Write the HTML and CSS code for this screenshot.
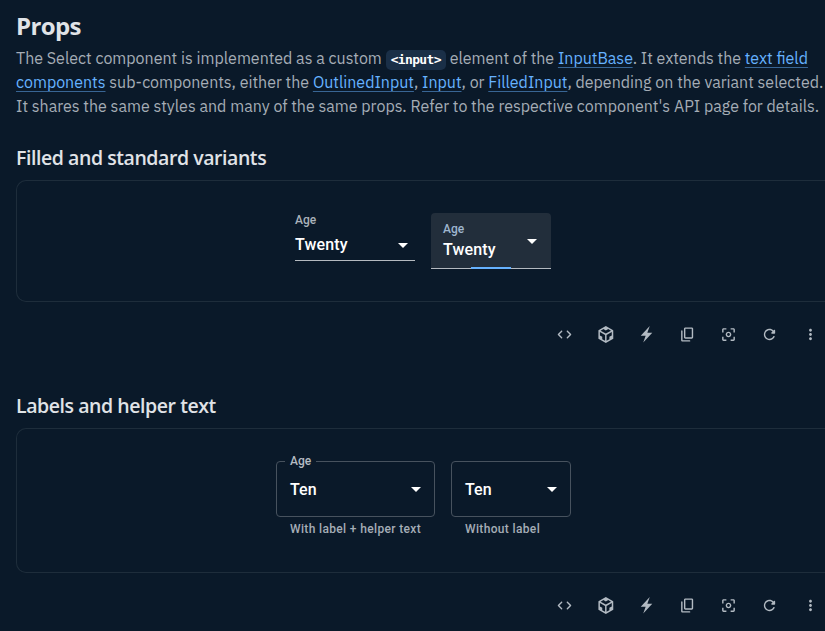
FILE: index.html
```html
<!DOCTYPE html>
<html lang="en">
<head>
<meta charset="utf-8">
<title>Select - Props</title>
<link rel="stylesheet" href="styles.css">
</head>
<body>
<svg class="defs" width="0" height="0" aria-hidden="true">
  <symbol id="code" viewBox="0 0 24 24"><path d="M8.7 15.9 4.8 12l3.9-3.9c.39-.39.39-1.01 0-1.4-.39-.39-1.01-.39-1.4 0l-4.59 4.59c-.39.39-.39 1.02 0 1.41l4.59 4.6c.39.39 1.01.39 1.4 0 .39-.39.39-1.01 0-1.4zm6.6 0 3.9-3.9-3.9-3.9c-.39-.39-.39-1.01 0-1.4.39-.39 1.01-.39 1.4 0l4.59 4.59c.39.39.39 1.02 0 1.41l-4.59 4.6c-.39.39-1.01.39-1.4 0-.39-.39-.39-1.01 0-1.4z"/></symbol>
  <symbol id="sandbox" viewBox="0 0 24 24"><path d="M2 6l10.455-6L22.91 6 23 17.95 12.455 24 2 18V6zm2.088 2.481v4.757l3.345 1.86v3.516l3.972 2.296v-8.272L4.088 8.481zm16.739 0l-7.317 4.157v8.272l3.972-2.296V15.1l3.345-1.861V8.48zM5.134 6.601l7.303 4.144 7.32-4.18-3.871-2.197-3.41 1.945-3.43-1.968L5.133 6.6z"/></symbol>
  <symbol id="bolt" viewBox="0 0 19 28"><path d="M8.13378 16.1087H0L14.8696 0L10.8662 11.1522L19 11.1522L4.13043 27.2609L8.13378 16.1087Z"/></symbol>
  <symbol id="copy" viewBox="0 0 24 24"><path d="M15 20H5V7c0-.55-.45-1-1-1s-1 .45-1 1v13c0 1.1.9 2 2 2h10c.55 0 1-.45 1-1s-.45-1-1-1zm5-4V4c0-1.1-.9-2-2-2H9c-1.1 0-2 .9-2 2v12c0 1.1.9 2 2 2h9c1.1 0 2-.9 2-2zm-2 0H9V4h9v12z"/></symbol>
  <symbol id="focus" viewBox="0 0 24 24"><path d="M5 15H3v4c0 1.1.9 2 2 2h4v-2H5v-4zM5 5h4V3H5c-1.1 0-2 .9-2 2v4h2V5zm14-2h-4v2h4v4h2V5c0-1.1-.9-2-2-2zm0 16h-4v2h4c1.1 0 2-.9 2-2v-4h-2v4zM12 8c-2.21 0-4 1.79-4 4s1.79 4 4 4 4-1.79 4-4-1.79-4-4-4zm0 6c-1.1 0-2-.9-2-2s.9-2 2-2 2 .9 2 2-.9 2-2 2z"/></symbol>
  <symbol id="refresh" viewBox="0 0 24 24"><path d="M17.65 6.35c-1.63-1.63-3.94-2.57-6.48-2.31-3.67.37-6.69 3.35-7.1 7.02C3.52 15.91 7.27 20 12 20c3.19 0 5.93-1.87 7.21-4.56.32-.67-.16-1.44-.9-1.44-.37 0-.72.2-.88.53-1.13 2.43-3.84 3.97-6.8 3.31-2.22-.49-4.01-2.3-4.48-4.52C5.31 9.44 8.26 6 12 6c1.66 0 3.14.69 4.22 1.78l-1.51 1.51c-.63.63-.19 1.71.7 1.71H19c.55 0 1-.45 1-1V6.41c0-.89-1.08-1.34-1.71-.71l-.64.65z"/></symbol>
  <symbol id="more" viewBox="0 0 24 24"><path d="M12 8c1.1 0 2-.9 2-2s-.9-2-2-2-2 .9-2 2 .9 2 2 2zm0 2c-1.100 0-2 .9-2 2s.9 2 2 2 2-.9 2-2-.9-2-2-2zm0 6c-1.100 0-2 .9-2 2s.9 2 2 2 2-.9 2-2-.9-2-2-2z"/></symbol>
  <symbol id="arrow" viewBox="0 0 24 24"><path d="M7 10l5 5 5-5z"/></symbol>
</svg>
<main>
  <h2>Props</h2>
  <p class="intro">
    <span class="line">The Select component is implemented as a custom <code>&lt;input&gt;</code> element of the <a>InputBase</a>. It extends the <a>text field</a></span>
    <span class="line"><a>components</a> sub-components, either the <a>OutlinedInput</a>, <a>Input</a>, or <a>FilledInput</a>, depending on the variant selected.</span>
    <span class="line">It shares the same styles and many of the same props. Refer to the respective component's API page for details.</span>
  </p>

  <h3 class="h-filled">Filled and standard variants</h3>
  <section class="demo demo-filled">
    <div class="field standard">
      <span class="label">Age</span>
      <div class="value">Twenty<svg class="caret"><use href="#arrow"/></svg></div>
    </div>
    <div class="field filled">
      <div class="stack"><span class="label">Age</span><span class="text">Twenty</span></div>
      <svg class="caret"><use href="#arrow"/></svg>
    </div>
  </section>
  <div class="toolbar">
    <svg><use href="#code"/></svg><svg><use href="#sandbox"/></svg><svg><use href="#bolt"/></svg><svg><use href="#copy"/></svg><svg><use href="#focus"/></svg><svg><use href="#refresh"/></svg><svg><use href="#more"/></svg>
  </div>

  <h3 class="h-labels">Labels and helper text</h3>
  <section class="demo demo-labels">
    <div class="control wide">
      <div class="outlined"><span class="notch">Age</span>Ten<svg class="caret"><use href="#arrow"/></svg></div>
      <span class="helper">With label + helper text</span>
    </div>
    <div class="control">
      <div class="outlined">Ten<svg class="caret"><use href="#arrow"/></svg></div>
      <span class="helper">Without label</span>
    </div>
  </section>
  <div class="toolbar">
    <svg><use href="#code"/></svg><svg><use href="#sandbox"/></svg><svg><use href="#bolt"/></svg><svg><use href="#copy"/></svg><svg><use href="#focus"/></svg><svg><use href="#refresh"/></svg><svg><use href="#more"/></svg>
  </div>
</main>
</body>
</html>
```
FILE: styles.css
```css
* { box-sizing: border-box; }
body {
  margin: 0;
  height: 631px;
  overflow: hidden;
  background: #0a1929;
  color: #fff;
  font-family: Roboto, "Liberation Sans", sans-serif;
}
.defs { display: block; height: 0; }
svg { fill: currentColor; flex: none; }
main { padding: 8px 0 0 16px; }
h2, h3 {
  margin: 0;
  font-family: "Segoe UI", "Open Sans", "Noto Sans", sans-serif;
  color: #e0e3e7;
  white-space: nowrap;
}
h2 { font-size: 24px; line-height: 35px; padding-bottom: 1px; font-weight: 700; letter-spacing: -0.6px; }
.intro {
  margin: 2px 0 0;
  font: 16px/24px "IBM Plex Sans", "Noto Sans", sans-serif;
  color: #a5adb6;
}
.line { display: block; height: 24px; white-space: nowrap; }
a {
  color: #66b2ff;
  text-decoration: underline;
  text-decoration-color: rgba(102, 178, 255, 0.5);
  text-decoration-thickness: 1px;
  text-underline-offset: 3px;
}
code {
  display: inline-block;
  height: 20px;
  padding: 0 5px;
  border-radius: 5px;
  background: #1a2f47;
  color: #fff;
  font: 700 13px/20px "DejaVu Sans Mono", monospace;
  letter-spacing: -0.65px;
}
h3 { font-size: 19.5px; line-height: 30px; font-weight: 600; letter-spacing: -0.44px; }
.h-filled { margin-top: 25px; }
.h-labels { margin-top: 48px; }
.demo {
  display: flex;
  gap: 16px;
  margin-top: 7px;
  border: 1px solid #1e2d3b;
  border-right: 0;
  border-radius: 10px 0 0 10px;
}
.demo-filled { height: 122px; padding: 32px 0 0 278px; }
.demo-labels { height: 145px; padding: 32px 0 0 259px; }
.caret { width: 24px; height: 24px; }
.label { font-size: 12px; line-height: 14px; font-weight: 500; color: #abb2ba; }
.standard { width: 120px; height: 48px; border-bottom: 1px solid #b5bac0; }
.standard .label { display: block; }
.value {
  display: flex;
  justify-content: space-between;
  align-items: center;
  margin-top: 5px;
  height: 24px;
  font-size: 16px;
  font-weight: 500;
  letter-spacing: 0.15px;
}
.value .caret { margin-top: 2px; }
.filled {
  position: relative;
  display: flex;
  justify-content: space-between;
  width: 120px;
  height: 56px;
  padding: 9px 7px 0 12px;
  border-radius: 4px 4px 0 0;
  border-bottom: 1px solid #b5bac0;
  background: #222e3b;
}
.filled::after {
  content: "";
  position: absolute;
  left: 40px;
  bottom: -1px;
  width: 40px;
  height: 2px;
  background: #66b2ff;
}
.filled .caret { margin-top: 7px; }
.filled .label { display: block; color: #9fb6cf; }
.text { display: block; font-size: 16px; line-height: 20px; margin-top: 4px; font-weight: 500; letter-spacing: 0.15px; }
.toolbar {
  display: flex;
  gap: 24px;
  margin: 24px 0 0 540px;
  height: 17px;
  color: #b2bac2;
}
.toolbar svg { width: 17px; height: 17px; }
.control { width: 120px; }
.control.wide { width: 159px; }
.outlined {
  position: relative;
  display: flex;
  align-items: center;
  justify-content: space-between;
  height: 56px;
  padding: 0 6px 0 13px;
  border: 1px solid #47525e;
  border-radius: 4px;
  font-size: 16px;
  font-weight: 500;
  letter-spacing: 0.1px;
}
.notch {
  position: absolute;
  top: -8px;
  left: 8px;
  padding: 0 5px;
  background: #0a1929;
  color: #b5bbc2;
  font-size: 12px;
  font-weight: 500;
  letter-spacing: 0;
  line-height: 14px;
}
.helper {
  display: block;
  margin: 5px 0 0 14px;
  font-size: 12px;
  line-height: 14px;
  font-weight: 500;
  letter-spacing: 0.35px;
  color: #a5adb6;
  white-space: nowrap;
}
```
